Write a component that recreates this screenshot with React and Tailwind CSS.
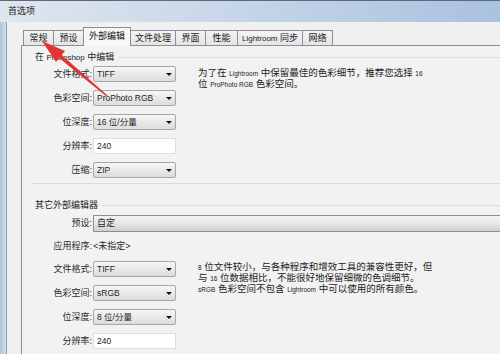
import React from 'react';

const tabs = [
  { label: '常规', w: 'w-[31px]' },
  { label: '预设', w: 'w-[31px]' },
  { label: '外部编辑', w: 'w-[48px]', active: true },
  { label: '文件处理', w: 'w-[46px]' },
  { label: '界面', w: 'w-[31px]' },
  { label: '性能', w: 'w-[33px]' },
  { label: 'Lightroom 同步', w: 'w-[66px]' },
  { label: '网络', w: 'w-[31px]' },
];

function Combo({ value, wide }) {
  return (
    <div
      className={`ml-[1px] flex h-[16px] items-center rounded-[2px] border border-[#a7a7a7] bg-[linear-gradient(#f6f6f6,#e9e9e9_50%,#dcdcdc)] pl-[3px] text-[8.5px] leading-none text-[#1e1e1e] ${
        wide ? 'flex-1 rounded-r-none border-r-0' : 'w-[83px]'
      }`}
    >
      <span className="flex-1 whitespace-nowrap">{value}</span>
      {!wide && (
        <span className="mr-[3px] h-0 w-0 border-x-[3px] border-t-[3px] border-x-transparent border-t-[#111]" />
      )}
    </div>
  );
}

function Field({ value }) {
  return (
    <div className="ml-[1px] flex h-[16px] w-[83px] items-center border border-[#dedede] bg-white pl-[3px] text-[8.5px] leading-none text-[#1e1e1e]">
      {value}
    </div>
  );
}

function Row({ label, children, className = '' }) {
  return (
    <div className={`flex h-[16px] items-center ${className}`}>
      <div className="w-[59px] whitespace-nowrap text-right text-[9px] leading-none text-[#2a2a2a]">{label}</div>
      {children}
    </div>
  );
}

function GroupTitle({ children }) {
  return (
    <div className="flex h-[12px] items-center">
      <span className="whitespace-nowrap pl-[2px] pr-[4px] text-[9px] leading-none text-[#222]">{children}</span>
      <div className="flex-1 border-t border-[#dddddd]" />
    </div>
  );
}

const En = ({ children }) => <span className="text-[6.5px]">{children}</span>;

export default function App() {
  return (
    <div className="relative h-[354px] w-[500px] overflow-hidden bg-[#f0f0f0] font-['Liberation_Sans','Noto_Sans_CJK_SC',sans-serif]">
      {/* title bar */}
      <div className="flex h-[22px] items-center border-t border-[#5d6a7d] bg-[linear-gradient(to_right,#dfe6ee,#cddaea_35%,#a9c2df)] pl-[8px] text-[9px] leading-none text-[#1b1b1b]">
        首选项
      </div>

      <div className="flex h-[332px]">
        <div className="w-[7px] border-r border-[#8d9db2] bg-[linear-gradient(to_right,#aec4de,#d3e0ee)]" />

        <div className="flex flex-1 flex-col pl-[14px] pt-[5px]">
          {/* tabs */}
          <div className="flex h-[18px] items-end pl-[2px]">
            {tabs.map((t, i) =>
              t.active ? (
                <div
                  key={t.label}
                  className={`relative z-10 -mb-px flex h-[19px] ${t.w} -ml-px items-start justify-center border-x border-t border-[#8c8e94] bg-[#f7f7f7] pt-[4px] text-[9px] leading-none text-[#111]`}
                >
                  {t.label}
                </div>
              ) : (
                <div
                  key={t.label}
                  className={`flex h-[15px] ${t.w} ${i > 0 ? '-ml-px' : ''} items-center justify-center border-x border-t border-[#8c8e94] bg-[linear-gradient(#f4f4f4,#e4e4e4)] whitespace-nowrap text-[9px] leading-none text-[#222]`}
                >
                  {t.label === 'Lightroom 同步' ? (
                    <span>
                      <span className="text-[8px]">Lightroom</span> 同步
                    </span>
                  ) : (
                    t.label
                  )}
                </div>
              )
            )}
          </div>

          {/* tab panel */}
          <div className="flex-1 border-l border-t border-[#8c8e94] bg-[#f2f2f2]">
            {/* group 1 */}
            <div className="ml-[11px] mt-[5px] border-b border-[#dadada] pb-[5px]">
              <GroupTitle>
                在 <span className="text-[8px]">Photoshop</span> 中编辑
              </GroupTitle>
              <div className="mt-[3px] flex">
                <div className="flex flex-col gap-[8px]">
                  <Row label="文件格式:">
                    <Combo value="TIFF" />
                  </Row>
                  <Row label="色彩空间:">
                    <Combo value="ProPhoto RGB" />
                  </Row>
                  <Row label="位深度:">
                    <Combo value="16 位/分量" />
                  </Row>
                  <Row label="分辨率:">
                    <Field value="240" />
                  </Row>
                  <Row label="压缩:">
                    <Combo value="ZIP" />
                  </Row>
                </div>
                <div className="ml-[22px] mt-[2px] whitespace-nowrap text-[9.5px] leading-[10px] text-[#222]">
                  <div>
                    为了在 <En>Lightroom</En> 中保留最佳的色彩细节，推荐您选择 <En>16</En>
                  </div>
                  <div>
                    位 <En>ProPhoto RGB</En> 色彩空间。
                  </div>
                </div>
              </div>
            </div>

            {/* group 2 */}
            <div className="ml-[11px] mt-[15px]">
              <GroupTitle>其它外部编辑器</GroupTitle>
              <Row label="预设:" className="mt-[4px]">
                <div className="ml-[1px] flex h-[17px] flex-1 items-center border-y border-l border-[#8f8f8f] bg-[linear-gradient(#f3f3f3,#e6e6e6_50%,#cfcfcf)] pl-[3px] text-[9px] leading-none text-[#1e1e1e]">
                  自定
                </div>
              </Row>
              <Row label="应用程序:" className="mt-[7px]">
                <span className="ml-[1px] text-[9px] leading-none text-[#222]">&lt;未指定&gt;</span>
              </Row>
              <div className="mt-[7px] flex">
                <div className="flex flex-col gap-[8px]">
                  <Row label="文件格式:">
                    <Combo value="TIFF" />
                  </Row>
                  <Row label="色彩空间:">
                    <Combo value="sRGB" />
                  </Row>
                  <Row label="位深度:">
                    <Combo value="8 位/分量" />
                  </Row>
                  <Row label="分辨率:">
                    <Field value="240" />
                  </Row>
                </div>
                <div className="ml-[22px] mt-[1px] whitespace-nowrap text-[9.5px] leading-[10px] text-[#222]">
                  <div>
                    <En>8</En> 位文件较小，与各种程序和增效工具的兼容性更好，但
                  </div>
                  <div>
                    与 <En>16</En> 位数据相比，不能很好地保留细微的色调细节。
                  </div>
                  <div>
                    <En>sRGB</En> 色彩空间不包含 <En>Lightroom</En> 中可以使用的所有颜色。
                  </div>
                </div>
              </div>
            </div>
          </div>
        </div>
      </div>

      {/* red arrow annotation */}
      <svg className="pointer-events-none absolute left-0 top-0" width="500" height="354" viewBox="0 0 500 354">
        <polygon
          points="42,41 65,51 61.7,55 107.5,95.4 106.5,96.6 59.1,58 56,62"
          fill="#e2342e"
        />
      </svg>
    </div>
  );
}
